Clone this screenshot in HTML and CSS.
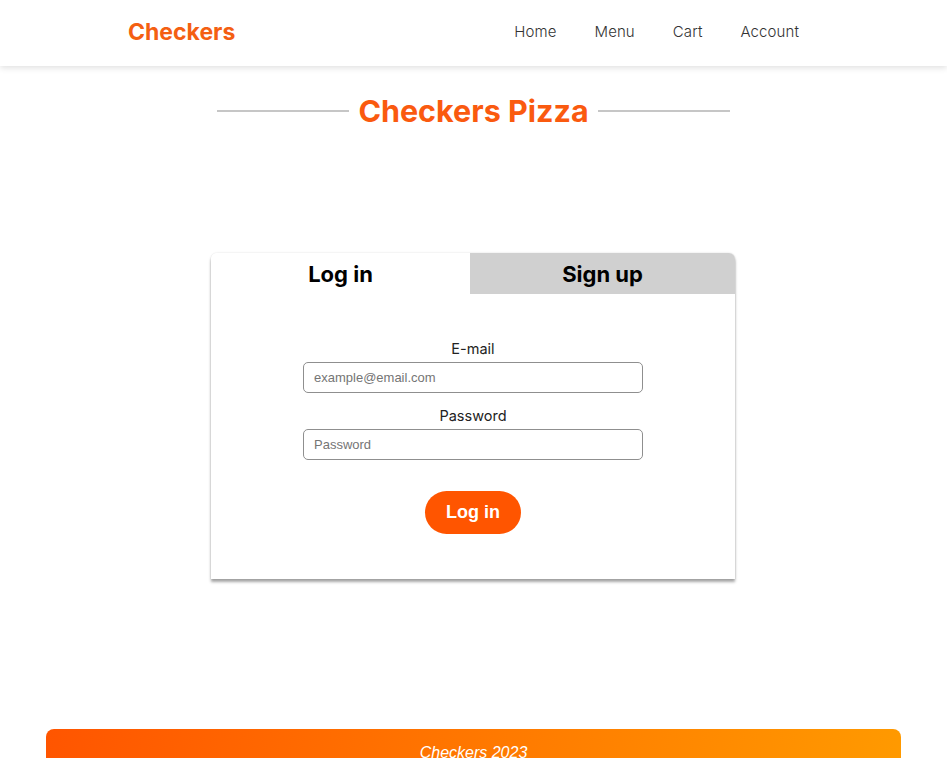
FILE: index.html
```html
<!DOCTYPE html>
<html lang="en">
<head>
<meta charset="utf-8">
<title>Checkers Pizza</title>
<link rel="stylesheet" href="styles.css">
</head>
<body>
<header class="site-header">
  <a class="logo" href="#">Checkers</a>
  <nav class="nav">
    <a href="#">Home</a>
    <a href="#">Menu</a>
    <a href="#">Cart</a>
    <a href="#">Account</a>
  </nav>
</header>
<main class="main">
  <h1 class="page-title"><span class="rule"></span><span class="title-text">Checkers Pizza</span><span class="rule"></span></h1>
  <section class="card">
    <div class="tabs">
      <div class="tab active">Log in</div>
      <div class="tab">Sign up</div>
    </div>
    <form class="form">
      <label class="label" for="email">E-mail</label>
      <input class="input" id="email" type="email" placeholder="example@email.com">
      <label class="label" for="pw">Password</label>
      <input class="input" id="pw" type="password" placeholder="Password">
      <button class="btn" type="button">Log in</button>
    </form>
  </section>
</main>
<footer class="footer">Checkers 2023</footer>
</body>
</html>
```
FILE: styles.css
```css
* { box-sizing: border-box; }
html, body { margin: 0; padding: 0; }
body {
  font-family: Inter, "Liberation Sans", sans-serif;
  background: #fff;
  color: #222;
  height: 758px;
  overflow: hidden;
}
.site-header {
  height: 66px;
  display: flex;
  align-items: center;
  justify-content: space-between;
  padding: 0 148px 3px 128px;
  box-shadow: 0 2px 6px rgba(0,0,0,0.12);
  position: relative;
}
.logo {
  color: #f45f12;
  font-weight: 700;
  font-size: 23px;
  text-decoration: none;
}
.nav { display: flex; gap: 38px; }
.nav a {
  color: #333;
  font-size: 15px;
  font-weight: 300;
  text-decoration: none;
  letter-spacing: 0.1px;
}
.main { display: flex; flex-direction: column; align-items: center; }
.page-title {
  margin: 25px 0 0;
  display: flex;
  align-items: center;
  gap: 9px;
  font-size: 30.5px;
  font-weight: 700;
  color: #fa5a0f;
  line-height: 40px;
}
.rule { display: block; width: 132px; height: 2px; background: #c6c6c6; }
.card {
  margin-top: 122px;
  margin-right: 1px;
  width: 524px;
  background: #fff;
  border-radius: 6px 6px 0 0;
  box-shadow: 0 3px 3px rgba(0,0,0,0.35), 0 0 2px rgba(0,0,0,0.15);
}
.tabs { display: flex; height: 41px; }
.tab {
  display: flex;
  align-items: center;
  justify-content: center;
  font-weight: 700;
  font-size: 22px;
  color: #000;
}
.tab.active { width: 259px; background: #fff; border-radius: 6px 6px 0 0; }
.tab:not(.active) { flex: 1; background: #d0d0d0; border-radius: 0 6px 0 0; }
.form {
  display: flex;
  flex-direction: column;
  align-items: center;
  padding: 46px 0 45px;
}
.label {
  font-size: 14.5px;
  color: #222;
  line-height: 18px;
  margin-bottom: 4px;
}
.input {
  width: 340px;
  height: 31px;
  border: 1px solid #8f8f8f;
  border-radius: 5px;
  padding: 0 10px;
  font-family: "Liberation Sans", Arial, sans-serif;
  font-size: 13px;
  margin-bottom: 14px;
}
.input::placeholder { color: #757575; }
.btn {
  margin-top: 17px;
  width: 96px;
  height: 43px;
  border: none;
  border-radius: 22px;
  background: #ff5500;
  color: #fff;
  font-family: "Liberation Sans", Arial, sans-serif;
  font-weight: 700;
  font-size: 18px;
}
.footer {
  position: absolute;
  left: 46px;
  right: 46px;
  top: 729px;
  height: 60px;
  border-radius: 8px 8px 0 0;
  background: linear-gradient(100deg, #ff5500 0%, #ff9a00 100%);
  color: #fff;
  font-family: "Liberation Sans", Arial, sans-serif;
  font-style: italic;
  font-size: 16px;
  text-align: center;
  padding-top: 15px;
}
```
